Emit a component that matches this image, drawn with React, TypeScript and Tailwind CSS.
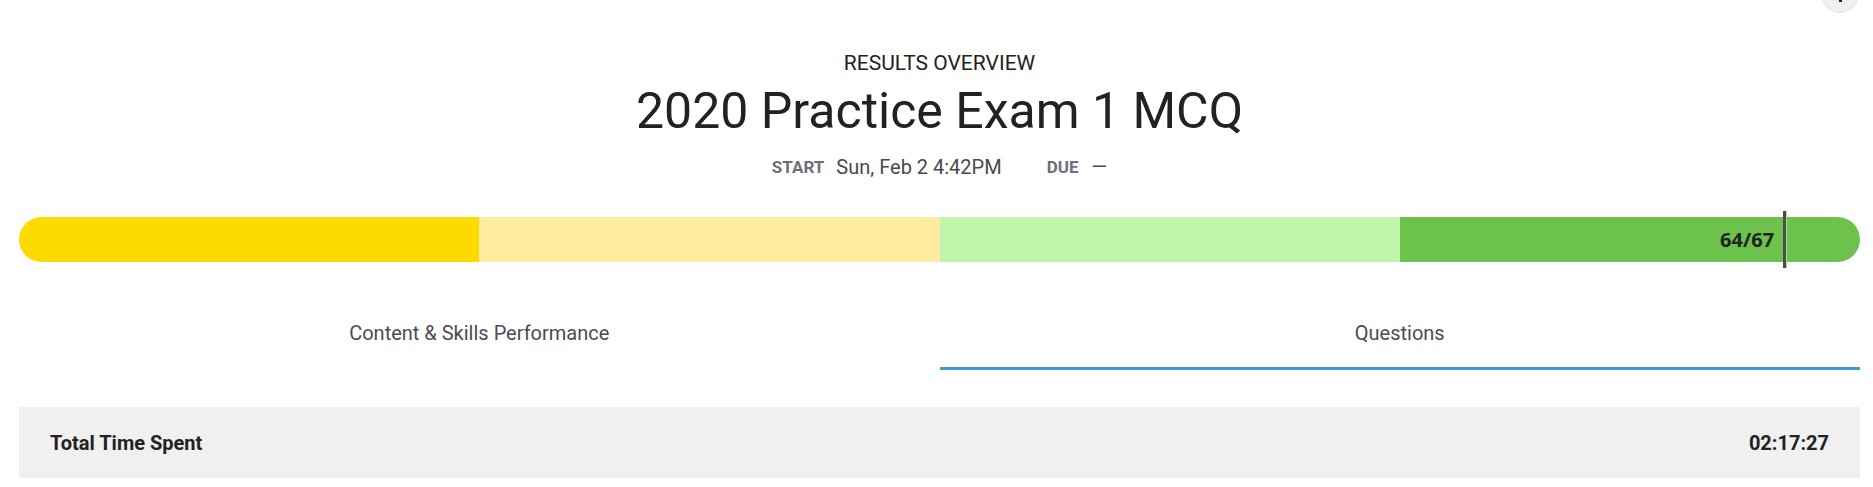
import { useState } from "react"

const segments = ["bg-[#fddb00]", "bg-[#feeba0]", "bg-[#c0f5ab]", "bg-[#6cc24b]"]

export default function App() {
  const [tab, setTab] = useState("questions")
  const score = 64
  const total = 67

  return (
    <div className="relative min-h-screen overflow-hidden bg-white font-['Roboto',sans-serif] text-[#222]">
      {/* floating help button, mostly off screen */}
      <div className="absolute right-[14px] top-[-25px] flex h-[38px] w-[38px] items-end justify-center rounded-full border border-[#e2e2e2] bg-[#f0f0f0]">
        <div className="mb-[10px] h-[4px] w-[3px] bg-[#222]" />
      </div>

      <div className="ml-[19px] mr-[13px]">
        <div className="pt-[50px] text-center">
          <div className="text-[21px] leading-[26px] uppercase">Results Overview</div>
          <h1 className="mt-[6px] text-[50px] leading-[58px]">2020 Practice Exam 1 MCQ</h1>
          <div className="mt-[14px] flex items-center justify-center text-[20px] leading-[26px]">
            <span className="mr-[12px] text-[17px] font-bold text-[#6e6e78]">START</span>
            <span className="text-[#4a4a4a]">Sun, Feb 2 4:42PM</span>
            <span className="ml-[45px] mr-[13px] text-[17px] font-bold text-[#6e6e78]">DUE</span>
            <span className="text-[#4a4a4a]">—</span>
          </div>
        </div>

        <div className="relative mt-[37px] h-[45px]">
          <div className="flex h-full overflow-hidden rounded-full">
            {segments.map((c) => (
              <div key={c} className={`flex-1 ${c}`} />
            ))}
          </div>
          <div
            className="absolute top-[-6px] bottom-[-6px] w-[3px] bg-[#4a4a55] shadow-[1px_0_0_#a8dd92]"
            style={{ left: `${(score / total) * 100 + 0.3}%` }}
          >
            <span className="absolute right-full top-1/2 mr-[9px] -translate-y-1/2 font-['Open_Sans',sans-serif] text-[20px] font-bold text-[#222]">
              {score}/{total}
            </span>
          </div>
        </div>

        <div className="mt-[24px] flex">
          <button
            onClick={() => setTab("content")}
            className={`flex-1 pt-[34px] pb-[21px] text-[20px] leading-[26px] text-[#4b4b55] border-b-[3px] ${tab === "content" ? "border-[#3d98d5]" : "border-transparent"}`}
          >
            Content &amp; Skills Performance
          </button>
          <button
            onClick={() => setTab("questions")}
            className={`flex-1 pt-[34px] pb-[21px] text-[20px] leading-[26px] text-[#4b4b55] border-b-[3px] ${tab === "questions" ? "border-[#3d98d5]" : "border-transparent"}`}
          >
            Questions
          </button>
        </div>

        <div className="mt-[37px] flex h-[71px] items-center justify-between bg-[#f0f0f0] px-[31px] text-[20px] font-bold">
          <span>Total Time Spent</span>
          <span>02:17:27</span>
        </div>
      </div>
    </div>
  )
}
